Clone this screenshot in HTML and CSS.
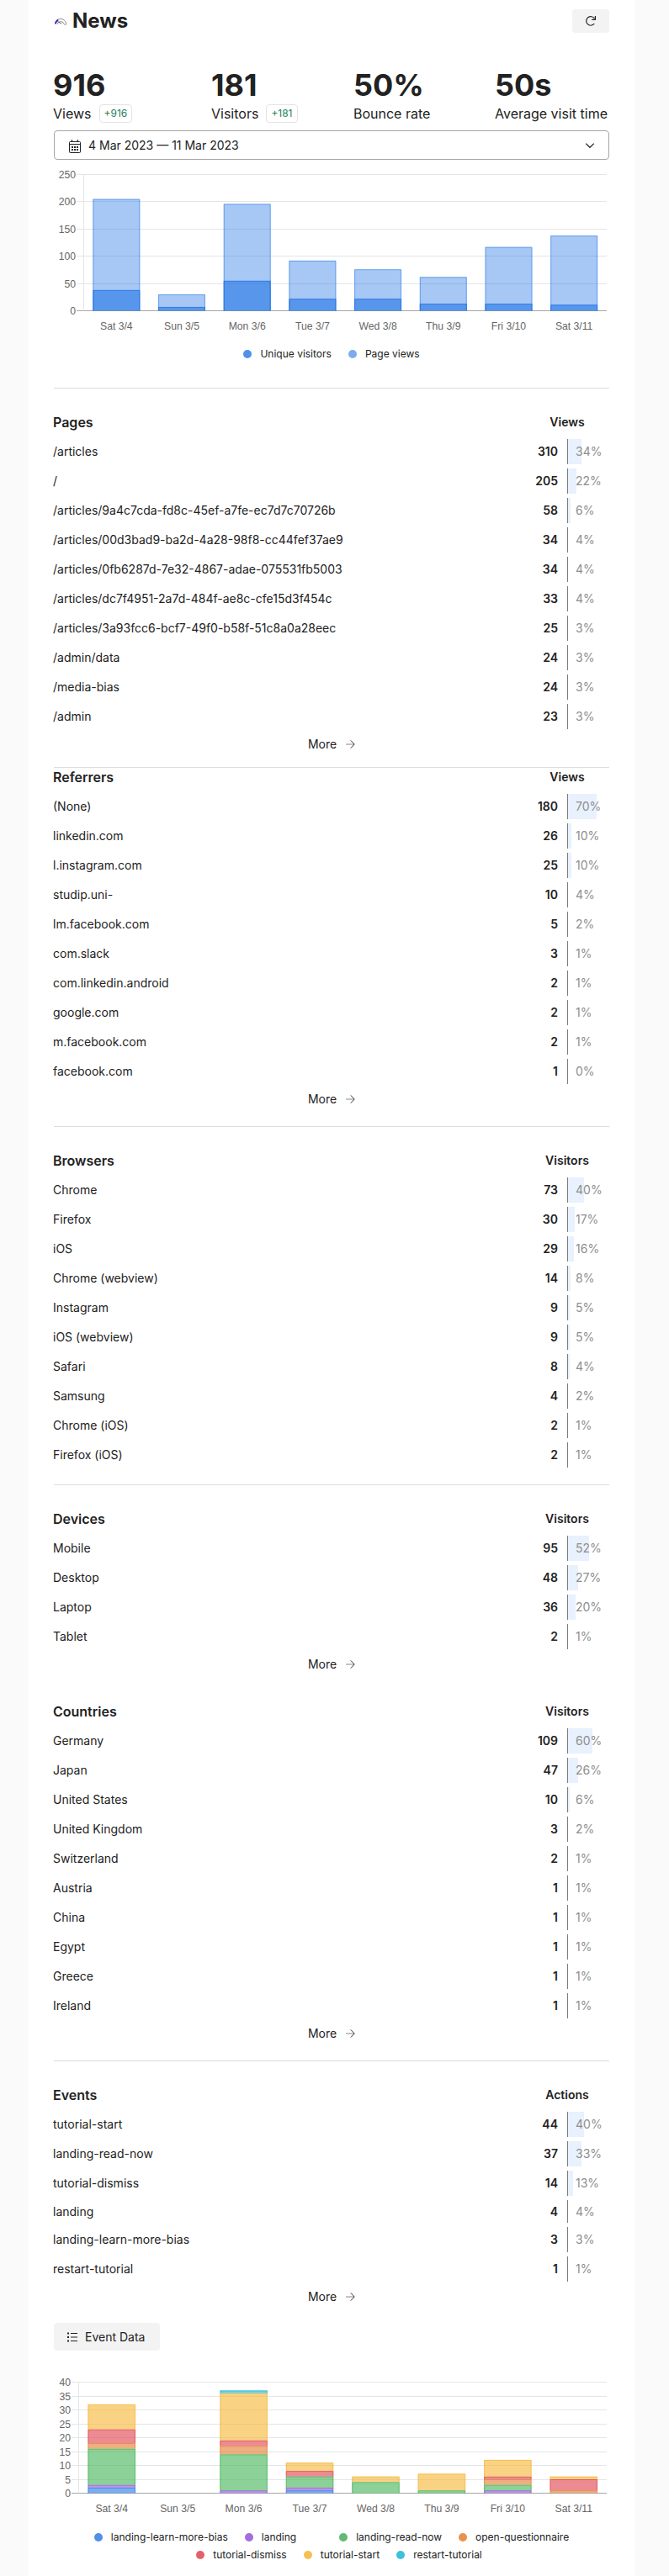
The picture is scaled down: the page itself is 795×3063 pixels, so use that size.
FILE: index.html
```html
<!DOCTYPE html>
<html lang="en">
<head>
<meta charset="utf-8">
<title>News</title>
<link rel="stylesheet" href="styles.css">
</head>
<body>
<main class="page">
  <header class="header">
    <h1 class="title">
      <svg class="favicon" viewBox="0 0 16 16" width="16" height="16" fill="none">
        <path d="M1.4 12a6.6 6.6 0 0 1 13.2 0M4 12.2a4.2 4.2 0 0 1 8.2-.6M14.6 12l-2.2.3" stroke="#777" stroke-width=".8"/>
        <path d="M2 11.2a6 6 0 0 1 3.2-4.6" stroke="#3a20c0" stroke-width="1.8"/>
        <path d="M4.6 8.6l4.6 2.6" stroke="#333" stroke-width=".8"/>
      </svg>
      <span>News</span>
    </h1>
    <button class="refresh" aria-label="Refresh">
      <svg viewBox="0 0 14 14" width="14" height="14" fill="none" stroke="#222" stroke-width="1.2">
        <path d="M11.2 10.2A5.3 5.3 0 1 1 11.6 4.3"/><path d="M12.4 1v4.3H8.2"/>
      </svg>
    </button>
  </header>

  <section class="metrics">
    <div class="metric"><div class="value">916</div><div class="label">Views <span class="change">+916</span></div></div>
    <div class="metric"><div class="value">181</div><div class="label">Visitors <span class="change">+181</span></div></div>
    <div class="metric"><div class="value">50%</div><div class="label">Bounce rate</div></div>
    <div class="metric"><div class="value">50s</div><div class="label">Average visit time</div></div>
  </section>

  <div class="select">
    <svg class="calendar" viewBox="0 0 14 16" width="14" height="16" fill="none" stroke="#222">
      <rect x=".5" y="2.5" width="13" height="13" rx="1"/><path d="M.5 5.5h13M3.5 0v3M10.5 0v3"/>
      <path d="M3 9h2M6 9h2M9 9h2M3 12h2M6 12h2M9 12h2" stroke-width="2"/>
    </svg>
    <span class="range">4 Mar 2023 — 11 Mar 2023</span>
    <svg viewBox="0 0 12 8" width="12" height="8" fill="none" stroke="#222" stroke-width="1.2"><path d="M1.2 1.6 6 6.3l4.8-4.7"/></svg>
  </div>

  <svg class="chart chart-views" id="views-chart" width="660" height="200"></svg>
  <div class="legend legend-views">
    <div class="legend-row">
      <span class="key"><i class="dot unique"></i>Unique visitors</span>
      <span class="key"><i class="dot views"></i>Page views</span>
    </div>
  </div>

  <section class="table ruled pages" data-table="pages"></section>
  <section class="table ruled referrers" data-table="referrers"></section>
  <section class="table ruled browsers" data-table="browsers"></section>
  <section class="table ruled devices" data-table="devices"></section>
  <section class="table countries" data-table="countries"></section>
  <section class="table ruled events" data-table="events"></section>

  <button class="event-data">
    <svg viewBox="0 0 12 12" width="12" height="12" stroke="#222"><path d="M4 1.5h8M4 6h8M4 10.5h8" stroke-width="1.1"/><path d="M0 1.5h2M0 6h2M0 10.5h2" stroke-width="1.8"/></svg>
    Event Data
  </button>

  <svg class="chart chart-events" id="events-chart" width="660" height="170"></svg>
  <div class="legend legend-events">
    <div class="legend-row">
      <span class="key"><i class="dot blue"></i>landing-learn-more-bias</span>
      <span class="key key-wide"><i class="dot purple"></i>landing</span>
      <span class="key"><i class="dot green"></i>landing-read-now</span>
      <span class="key"><i class="dot orange"></i>open-questionnaire</span>
    </div>
    <div class="legend-row legend-row-last">
      <span class="key"><i class="dot red"></i>tutorial-dismiss</span>
      <span class="key"><i class="dot yellow"></i>tutorial-start</span>
      <span class="key"><i class="dot cyan"></i>restart-tutorial</span>
    </div>
  </div>
</main>
<script src="app.js"></script>
</body>
</html>
```

FILE: styles.css
```css
* { box-sizing: border-box; }
body {
  margin: 0;
  background: #fafafa;
  color: #222;
  font: 14px/20px Inter, "Liberation Sans", sans-serif;
}
button { border: 0; font: inherit; color: inherit; }
.page {
  width: 720px;
  height: 3063px;
  margin-left: 34px;
  padding: 0 30px;
  background: #fff;
}
.header { display: flex; align-items: center; justify-content: space-between; height: 50px; }
.title { display: flex; align-items: center; gap: 6px; margin: 0; font-size: 24px; line-height: 30px; font-weight: 700; }
.refresh { display: grid; place-items: center; width: 44px; height: 28px; border-radius: 4px; background: #f3f3f3; }

.metrics { display: grid; grid-template-columns: 188px 169px 168px 135px; margin-left: -1px; padding-top: 31px; white-space: nowrap; }
.value { font-size: 36px; line-height: 40px; font-weight: 700; }
.label { display: flex; align-items: center; gap: 9px; height: 28px; font-size: 16px; }
.change { padding: 0 5px; border: 1px solid #e4e4e4; border-radius: 4px; font-size: 12px; line-height: 20px; color: #268058; }

.select {
  display: flex;
  align-items: center;
  height: 35px;
  margin-top: 6px;
  padding: 0 16px 0 17px;
  border: 1px solid #a6a6a6;
  border-radius: 4px;
}
.calendar { margin-top: 2px; }
.range { flex: 1; margin-left: 9px; }

.chart { display: block; overflow: visible; }
.chart-views { margin-top: 10px; }
.chart-events { margin-top: 30px; }
.chart text { font: 12.2px "Liberation Sans", Arial, sans-serif; fill: #666; }
.grid { stroke: #e5e5e5; }
.zero { stroke: #a6a6a6; }

.legend { padding-top: 11px; font-size: 12px; }
.legend-views { padding-top: 10px; }
.legend-row { display: flex; justify-content: center; gap: 20px; height: 21px; align-items: center; }
.legend-row-last { padding-left: 18px; }
.key { display: flex; align-items: center; gap: 10px; }
.key-wide { margin-right: 31px; }
.dot { width: 10px; height: 10px; border-radius: 50%; }
.unique, .blue { background: #5090e9; }
.views { background: #7dabee; }
.purple { background: #a06fdb; }
.green { background: #62b974; }
.orange { background: #e9924e; }
.red { background: #e5606a; }
.yellow { background: #f6c053; }
.cyan { background: #3fc0da; }

.table { display: flow-root; }
.ruled { border-top: 1px solid #dcdcdc; padding-top: 20px; }
.pages { margin-top: 30px; }
.referrers { margin-top: 14px; padding-top: 0; }
.browsers { margin-top: 19px; }
.devices { margin-top: 15px; }
.countries { margin-top: 23px; }
.events { margin-top: 19px; }
.table-head { display: flex; align-items: center; justify-content: space-between; height: 40px; font-weight: 600; }
.referrers .table-head { height: 31px; padding-bottom: 9px; }
.table-name { margin: 0 0 0 -1px; font-size: 16px; font-weight: 600; }
.table-metric { width: 100px; text-align: center; }
.row { display: flex; align-items: center; height: 30px; margin-bottom: 5px; }
.row-short { height: 27px; }
.row-name { flex: 1; margin-left: -1px; }
.count { font-weight: 600; text-align: right; margin-right: 11px; }
.percent { display: grid; align-items: center; width: 50px; height: 100%; border-left: 1px solid #7c7c7c; color: #8e8e8e; }
.percent > * { grid-area: 1 / 1; }
.percent span { padding-left: 9px; }
.bar { height: 100%; background: #e8f1fd; }
.more { display: flex; align-items: center; justify-content: center; gap: 10px; height: 26px; }
.event-data { display: flex; align-items: center; gap: 9px; width: 126px; height: 33px; margin-top: 18px; padding: 0 16px; border-radius: 4px; background: #f3f3f3; white-space: nowrap; }
```

FILE: app.js
```js
const tables = {
  pages: { name: 'Pages', metric: 'Views', total: 916, more: true, rows: [
    ['/articles', 310], ['/', 205],
    ['/articles/9a4c7cda-fd8c-45ef-a7fe-ec7d7c70726b', 58],
    ['/articles/00d3bad9-ba2d-4a28-98f8-cc44fef37ae9', 34],
    ['/articles/0fb6287d-7e32-4867-adae-075531fb5003', 34],
    ['/articles/dc7f4951-2a7d-484f-ae8c-cfe15d3f454c', 33],
    ['/articles/3a93fcc6-bcf7-49f0-b58f-51c8a0a28eec', 25],
    ['/admin/data', 24], ['/media-bias', 24], ['/admin', 23]] },
  referrers: { name: 'Referrers', metric: 'Views', total: 257, more: true, rows: [
    ['(None)', 180], ['linkedin.com', 26], ['l.instagram.com', 25], ['studip.uni-', 10],
    ['lm.facebook.com', 5], ['com.slack', 3], ['com.linkedin.android', 2],
    ['google.com', 2], ['m.facebook.com', 2], ['facebook.com', 1]] },
  browsers: { name: 'Browsers', metric: 'Visitors', total: 181, rows: [
    ['Chrome', 73], ['Firefox', 30], ['iOS', 29], ['Chrome (webview)', 14], ['Instagram', 9],
    ['iOS (webview)', 9], ['Safari', 8], ['Samsung', 4], ['Chrome (iOS)', 2], ['Firefox (iOS)', 2]] },
  devices: { name: 'Devices', metric: 'Visitors', total: 181, more: true, rows: [
    ['Mobile', 95], ['Desktop', 48], ['Laptop', 36], ['Tablet', 2]] },
  countries: { name: 'Countries', metric: 'Visitors', total: 181, more: true, rows: [
    ['Germany', 109], ['Japan', 47], ['United States', 10], ['United Kingdom', 3], ['Switzerland', 2],
    ['Austria', 1], ['China', 1], ['Egypt', 1], ['Greece', 1], ['Ireland', 1]] },
  events: { name: 'Events', metric: 'Actions', total: 111, more: true, rows: [
    ['tutorial-start', 44], ['landing-read-now', 37], ['tutorial-dismiss', 14],
    ['landing', 4, 'row-short'], ['landing-learn-more-bias', 3], ['restart-tutorial', 1]] }
};

const moreLink = `<div class="more">More
  <svg viewBox="0 0 12 12" width="12" height="12" fill="none" stroke="#333"><path d="M1 6h10" stroke="#888"/><path d="M6.8 1.4 11.2 6l-4.4 4.6"/></svg></div>`;

document.querySelectorAll('[data-table]').forEach(el => {
  const t = tables[el.dataset.table];
  const rows = t.rows.map(([name, count, cls = '']) => {
    const share = count / t.total;
    const width = Math.floor(share * 49);
    const bar = width > 1 ? `<div class="bar" style="width:${width}px"></div>` : '';
    return `<div class="row ${cls}"><div class="row-name">${name}</div><div class="count">${count}</div>` +
      `<div class="percent">${bar}<span>${Math.round(share * 100)}%</span></div></div>`;
  }).join('');
  el.innerHTML = `<div class="table-head"><h2 class="table-name">${t.name}</h2>` +
    `<div class="table-metric">${t.metric}</div></div>${rows}${t.more ? moreLink : ''}`;
});

const days = ['Sat 3/4', 'Sun 3/5', 'Mon 3/6', 'Tue 3/7', 'Wed 3/8', 'Thu 3/9', 'Fri 3/10', 'Sat 3/11'];

// Bars are [day index, from, to, fill, stroke].
function drawChart(id, { left, bottom, max, step, bars }) {
  const top = 7.5, right = 657;
  const y = v => bottom - v / max * (bottom - top);
  const slot = (right - left) / days.length;
  const width = slot * 0.72;
  let out = '';
  for (let v = 0; v <= max; v += step) {
    const gy = Math.floor(y(v)) + 0.5;
    out += `<path class="${v ? 'grid' : 'zero'}" d="M${left - 8.5} ${gy}H${right}"/>` +
      `<text x="${left - 9.5}" y="${gy + 4}" text-anchor="end">${v}</text>`;
  }
  out += `<path class="grid" d="M${left} ${top}V${bottom}"/>`;
  days.forEach((d, i) => {
    out += `<text x="${left + slot * (i + 0.5)}" y="${bottom + 22.5}" text-anchor="middle">${d}</text>`;
  });
  bars.forEach(([i, from, to, fill, stroke]) => {
    const x = left + slot * i + (slot - width) / 2;
    const t = y(to), b = y(from);
    out += `<rect x="${x}" y="${t}" width="${width}" height="${b - t}" fill="${fill}"/>` +
      `<path d="M${x + 0.5} ${b}V${t + 0.5}h${width - 1}V${b}" fill="none" stroke="${stroke}"/>`;
  });
  document.getElementById(id).innerHTML = out;
}

const visitors = [38, 7, 55, 22, 22, 13, 13, 11];
const views = [205, 30, 196, 92, 76, 62, 117, 138];
drawChart('views-chart', { left: 35.5, bottom: 169.5, max: 250, step: 50, bars: [
  ...views.map((v, i) => [i, 0, v, 'rgba(34,116,230,.4)', 'rgba(34,120,232,.5)']),
  ...visitors.map((v, i) => [i, 0, v, 'rgba(34,116,228,.6)', 'rgba(34,116,228,.7)'])
] });

const palette = [[38, 119, 229], [141, 80, 214], [62, 178, 84], [226, 124, 45], [224, 62, 72], [245, 180, 48], [16, 180, 212]];
const stacks = [
  [2, 1, 13, 2, 5, 9, 0], [], [0, 1, 13, 3, 2, 17, 1], [1, 1, 4, 0, 2, 3, 0],
  [0, 0, 4, 0, 0, 2, 0], [0, 0, 1, 0, 0, 6, 0], [0, 1, 2, 2, 1, 6, 0], [0, 0, 0, 1, 4, 1, 0]
];
const stackBars = [];
stacks.forEach((stack, day) => {
  let sum = 0;
  stack.forEach((n, k) => {
    if (n) stackBars.push([day, sum, sum + n, `rgba(${palette[k]},.6)`, `rgba(${palette[k]},.6)`]);
    sum += n;
  });
});
drawChart('events-chart', { left: 29.5, bottom: 139.5, max: 40, step: 5, bars: stackBars });
```
